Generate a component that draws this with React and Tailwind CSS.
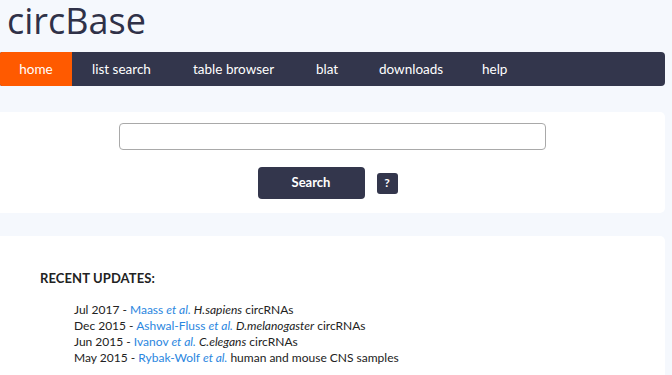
export default function App() {
  const font = { fontFamily: "Lato, 'Open Sans', sans-serif" };
  const nav = [
    ["list search", "w-[101px]"],
    ["table browser", "w-[123px]"],
    ["blat", "w-[63px]"],
    ["downloads", "w-[103px]"],
    ["help", "w-[60px]"],
  ];
  return (
    <div className="h-[375px] w-[672px] bg-[#f5f8fd] overflow-hidden" style={font}>
      <div className="h-[52px] pl-[7px] pt-[1px]">
        <div className="text-[36px] leading-[40px] font-medium text-[#2f3148] font-['Open_Sans']">circBase</div>
      </div>
      <div className="mr-[7px] h-[34px] rounded-r-[4px] rounded-l-[2px] bg-[#33364c] flex items-center text-white text-[13.5px]">
        <div className="h-full w-[72px] mr-[20px] bg-[#ff5a00] rounded-l-[2px] flex items-center justify-center">home</div>
        {nav.map(([t, w]) => (
          <div key={t} className={w}>{t}</div>
        ))}
      </div>
      <div className="mt-[26px] mr-[7px] h-[101px] bg-white rounded-r-[5px] flex flex-col items-center pt-[11px]">
        <input className="w-[427px] h-[27px] border border-[#a9a9a9] rounded-[4px] bg-white outline-none" />
        <div className="mt-[17px] mr-[10px] flex items-center">
          <button className="w-[107px] h-[32px] rounded-[4px] bg-[#33364c] text-white text-[13px] font-bold">Search</button>
          <button className="ml-[12px] w-[21px] h-[21px] rounded-[3px] bg-[#33364c] text-white text-[12px] font-bold leading-none">?</button>
        </div>
      </div>
      <div className="mt-[23px] mr-[7px] h-[140px] bg-white rounded-tr-[5px] pl-[40px] pt-[33px]">
        <div className="text-[13px] font-bold text-[#222] tracking-[0.1px]">RECENT UPDATES:</div>
        <div className="mt-[13px] pl-[34px] text-[12px] leading-[16px] text-[#222]">
          <div>Jul 2017 - <span className="text-[#2a86e0]">Maass <i>et al.</i></span> <i>H.sapiens</i> circRNAs</div>
          <div>Dec 2015 - <span className="text-[#2a86e0]">Ashwal-Fluss <i>et al.</i></span> <i>D.melanogaster</i> circRNAs</div>
          <div>Jun 2015 - <span className="text-[#2a86e0]">Ivanov <i>et al.</i></span> <i>C.elegans</i> circRNAs</div>
          <div>May 2015 - <span className="text-[#2a86e0]">Rybak-Wolf <i>et al.</i></span> human and mouse CNS samples</div>
        </div>
      </div>
    </div>
  );
}
